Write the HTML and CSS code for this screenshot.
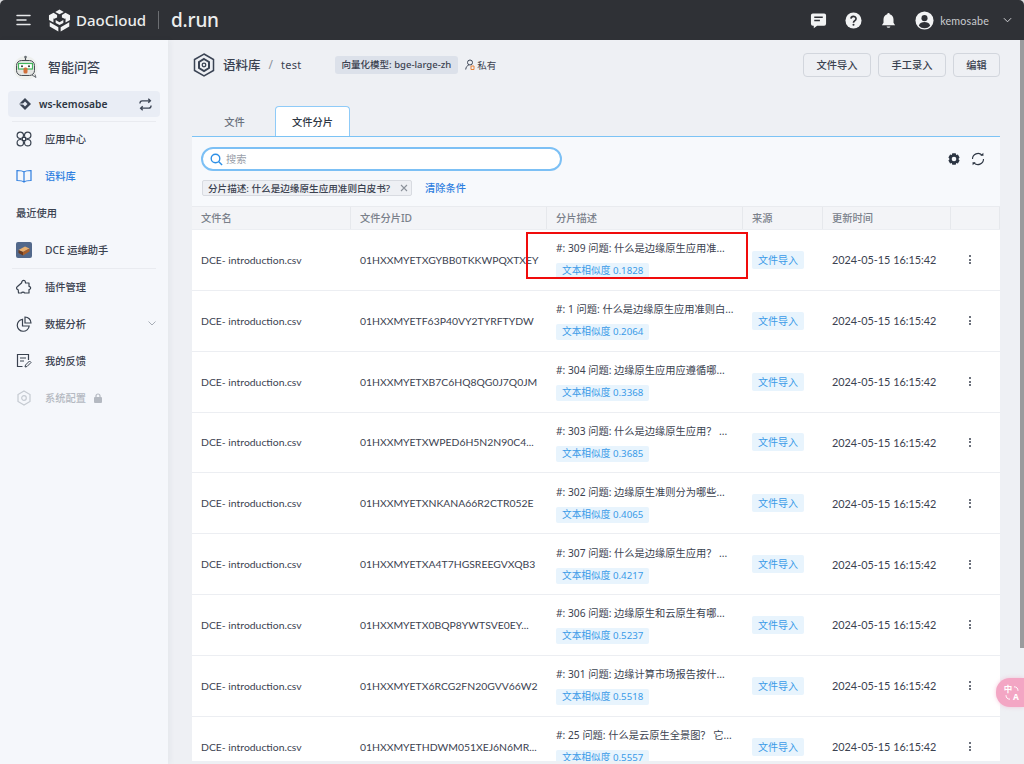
FILE: index.html
```html
<!DOCTYPE html>
<html lang="zh">
<head>
<meta charset="utf-8">
<title>语料库</title>
<link rel="stylesheet" href="styles.css">
</head>
<body>
<header class="topbar">
  <svg class="menu-icon" width="16" height="12" viewBox="0 0 16 12"><path d="M1 1.500h13M1 6h9M1 10.500h13" stroke="#e8e9eb" stroke-width="1.500" stroke-linecap="round" fill="none"/></svg>
  <svg class="logo-icon" width="23" height="23" viewBox="0 0 24 24"><path d="M12 .5l4.500 2.500L12 5.500 7.500 3zM5.800 4l3.700 2.200v2.600L6.600 10.300l-.9-.5v4.300L1 11.400V6.500zM18.200 4l-3.700 2.200v2.600l2.900 1.500.9-.5v4.300l4.700-2.700V6.500zM1.800 13.800l9 5.200v4.500l-9-5.200zM22.200 13.800l-9 5.200v4.500l9-5.200zM8 11.500l4 2.300 4-2.300v3l-4 2.300-4-2.300z" fill="#f2f3f4"/></svg>
  <span class="brand">DaoCloud</span>
  <span class="brand-sep"></span>
  <span class="brand-run">d.run</span>
  <span class="top-spacer"></span>
  <svg class="top-icon" width="17" height="17" viewBox="0 0 18 18"><path d="M3 1.500h12a2 2 0 0 1 2 2v9a2 2 0 0 1-2 2H7.500L4 17.200V14.500H3a2 2 0 0 1-2-2v-9a2 2 0 0 1 2-2z" fill="#f2f3f4"/><path d="M4.500 5.500h9M4.500 9h6" stroke="#2f3136" stroke-width="1.500"/></svg>
  <svg class="top-icon" width="17" height="17" viewBox="0 0 18 18"><circle cx="9" cy="9" r="8.500" fill="#f2f3f4"/><path d="M6.300 7a2.700 2.500 0 1 1 4 2.300c-1 .6-1.300 1-1.300 2" stroke="#2f3136" stroke-width="1.800" fill="none"/><circle cx="9" cy="13.500" r="1.100" fill="#2f3136"/></svg>
  <svg class="top-icon" width="17" height="17" viewBox="0 0 18 18"><path d="M9 1a1.300 1.300 0 0 1 1.300 1.400C13 3.100 14.300 5.300 14.300 8v3.500L16 14H2l1.700-2.500V8c0-2.700 1.300-4.900 4-5.600A1.300 1.300 0 0 1 9 1z" fill="#f2f3f4"/><path d="M7 15.300h4a2 1.500 0 0 1-4 0z" fill="#f2f3f4"/></svg>
  <svg class="user-icon" width="19" height="19" viewBox="0 0 20 20"><circle cx="10" cy="10" r="9.500" fill="#f2f3f4"/><circle cx="10" cy="7.500" r="3.200" fill="#2f3136"/><path d="M4 15.500c1-3 3.500-3.800 6-3.800s5 .8 6 3.800a8 8 0 0 1-12 0z" fill="#2f3136"/></svg>
  <span class="user-name">kemosabe</span>
  <svg class="user-caret" width="9" height="6" viewBox="0 0 10 6"><path d="M1 1l4 4 4-4" stroke="#d5d6d9" stroke-width="1.100" fill="none"/></svg>
</header>

<div class="shell">
  <aside class="sidebar">
    <div class="app-head">
      <svg width="26" height="26" viewBox="0 0 26 26"><circle cx="12.500" cy="14" r="12" fill="#eef0ee"/><path d="M12.500 3v3" stroke="#4a4f55" stroke-width="1.200"/><circle cx="12.500" cy="3" r="1.300" fill="#6a6f75"/><rect x="3.500" y="6.500" width="18" height="15" rx="5" fill="#e3e5e3" stroke="#4a4f55"/><rect x="5.500" y="9.500" width="14" height="5.500" fill="#fff" stroke="#43b65c" stroke-width="1.200"/><circle cx="9" cy="12.200" r="1" fill="#333"/><circle cx="16" cy="12.200" r="1" fill="#333"/><rect x="10.500" y="13.500" width="4" height="6" rx="1.500" fill="#d2703a"/><path d="M19 21l4 2.500-1-3" fill="#e3e5e3" stroke="#4a4f55" stroke-width=".8"/></svg>
      <span class="app-title">智能问答</span>
    </div>
    <div class="workspace">
      <svg width="14" height="14" viewBox="0 0 14 14"><path d="M7 1l6 6-6 6-6-6z" fill="#3b4454"/><path d="M7 4.500L9.500 7 7 9.500 4.500 7z" fill="#e9edf5"/><path d="M1 7h4" stroke="#e9edf5"/></svg>
      <span class="ws-name">ws-kemosabe</span>
      <svg class="ws-swap" width="13" height="13" viewBox="0 0 14 14"><path d="M1 6c0-1.800 1-3 2.500-3H12M10 .8L12.300 3 10 5.200M13 8c0 1.800-1 3-2.500 3H2M4 8.800L1.700 11 4 13.200" stroke="#3b4454" stroke-width="1.400" fill="none"/></svg>
    </div>
    <div class="side-rule"></div>
    <nav class="nav">
      <a class="nav-item">
        <svg width="16" height="16" viewBox="0 0 16 16"><g fill="none" stroke="#39424f" stroke-width="1.200"><circle cx="4.300" cy="4.300" r="3.200"/><circle cx="11.700" cy="4.300" r="3.200"/><circle cx="4.300" cy="11.700" r="3.200"/><circle cx="11.700" cy="11.700" r="3.200"/></g><rect x="6.500" y="6.500" width="3" height="3" fill="#f5f7fb" stroke="#39424f"/></svg>
        <span>应用中心</span>
      </a>
      <a class="nav-item nav-active">
        <svg width="16" height="16" viewBox="0 0 16 16"><path d="M8 4C6.500 2.800 4 2.500 1 2.500v10c3 0 5.500.3 7 1.500 1.500-1.200 4-1.500 7-1.500v-10C12 2.500 9.500 2.800 8 4zM8 4v10" stroke="#2f7fe0" stroke-width="1.200" fill="none"/></svg>
        <span>语料库</span>
      </a>
    </nav>
    <div class="recent">最近使用</div>
    <a class="nav-item">
      <svg width="16" height="16" viewBox="0 0 16 16"><rect width="16" height="16" rx="2" fill="#52688a"/><path d="M2.500 8l6.500-3.500 4.500 2-6.500 3.500z" fill="#e8b070"/><path d="M2.500 8L7 10v3.500l-4.500-2.500z" fill="#6b3a1c"/><path d="M7 10l6.500-3.500v3L7 13.500z" fill="#a8602c"/></svg>
      <span>DCE 运维助手</span>
    </a>
    <div class="side-rule side-rule-tight"></div>
    <a class="nav-item">
      <svg width="16" height="16" viewBox="0 0 16 16"><path d="M6 2.500c.3-1.500 3-1.500 3.300 0l.2 1.500h3.500v3.300c1.500.3 2 1.600 1.200 2.700-.3.400-.7.600-1.200.7V14H8.500c-.3-1.300-2.700-1.300-3 0H2.500l-.3-3.200C.3 10.500 0 8.500 1.500 7.500L5.500 4z" fill="none" stroke="#39424f" stroke-width="1.200" stroke-linejoin="round"/></svg>
      <span>插件管理</span>
    </a>
    <a class="nav-item">
      <svg width="16" height="16" viewBox="0 0 16 16"><g fill="none" stroke="#39424f" stroke-width="1.200"><path d="M6.500 3.300A6 6 0 1 0 13.200 10H6.500z"/><path d="M9 1a6 6 0 0 1 6 6H9z"/></g></svg>
      <span>数据分析</span>
      <svg class="nav-caret" width="8" height="5" viewBox="0 0 8 5"><path d="M.5.500L4 4 7.500.500" stroke="#a7adb6" fill="none"/></svg>
    </a>
    <a class="nav-item">
      <svg width="16" height="16" viewBox="0 0 16 16"><path d="M12.500 7V1.500h-11v12h5" fill="none" stroke="#39424f" stroke-width="1.200"/><path d="M4 5h6M4 8h4" stroke="#39424f" stroke-width="1.200"/><path d="M9 14l.5-2 4-4 1.500 1.500-4 4z" fill="none" stroke="#39424f"/></svg>
      <span>我的反馈</span>
    </a>
    <a class="nav-item nav-disabled">
      <svg width="16" height="16" viewBox="0 0 16 16"><path d="M8 1l6 3.500v7L8 15l-6-3.500v-7z" fill="none" stroke="#c5cad1" stroke-width="1.200"/><circle cx="8" cy="8" r="2.300" fill="none" stroke="#c5cad1" stroke-width="1.200"/></svg>
      <span>系统配置</span>
      <svg class="lock" width="10" height="10" viewBox="0 0 10 10"><rect x="1" y="4" width="8" height="6" rx="1" fill="#b4b9c1"/><path d="M3 4V3a2 2 0 0 1 4 0v1" stroke="#b4b9c1" stroke-width="1.200" fill="none"/></svg>
    </a>
  </aside>

  <main class="main">
    <div class="page-head">
      <svg class="head-icon" width="24" height="24" viewBox="0 0 24 24"><path d="M12 1l9.500 5.500v11L12 23l-9.500-5.500v-11z" fill="none" stroke="#3b4454" stroke-width="1.500"/><path d="M12 6l5 3v6l-5 3-5-3V9z" fill="none" stroke="#3b4454" stroke-width="2"/><circle cx="12" cy="12" r="1.800" fill="none" stroke="#3b4454" stroke-width="1.300"/></svg>
      <span class="crumb-root">语料库</span>
      <span class="crumb-sep">/</span>
      <span class="crumb-leaf">test</span>
      <span class="model-tag">向量化模型: bge-large-zh</span>
      <span class="private">
        <svg width="10" height="12" viewBox="0 0 10 12"><circle cx="5" cy="3.500" r="2.500" fill="none" stroke="#3b4454"/><path d="M.7 10.500c.3-2.500 1.500-4 3-4.300" stroke="#3b4454" fill="none"/><path d="M6 7h3v3.500H6z" fill="none" stroke="#e8833a"/></svg>
        私有
      </span>
      <span class="top-spacer"></span>
      <button class="btn">文件导入</button>
      <button class="btn">手工录入</button>
      <button class="btn btn-small">编辑</button>
    </div>

    <div class="tabs">
      <span class="tab">文件</span>
      <span class="tab tab-active">文件分片</span>
    </div>

    <section class="panel">
      <div class="toolbar">
        <div class="search">
          <svg width="13" height="13" viewBox="0 0 13 13"><circle cx="5.500" cy="5.500" r="4.300" fill="none" stroke="#2d8fe6" stroke-width="1.400"/><path d="M8.800 8.800l3.300 3.300" stroke="#2d8fe6" stroke-width="1.400"/></svg>
          <span class="search-hint">搜索</span>
        </div>
        <span class="top-spacer"></span>
        <svg class="tool-icon" width="14" height="14" viewBox="0 0 14 14"><path d="M5.300.8h3.400l.5 1.700 1.700-.4 1.700 3-1.200 1.400 1.200 1.400-1.700 3-1.700-.4-.5 1.700H5.300l-.5-1.700-1.700.4-1.700-3L2.600 6.500 1.400 5.100l1.700-3 1.700.4z" fill="#2d3643" transform="translate(0 .5)"/><circle cx="7" cy="7" r="2.300" fill="#f7f9fc"/></svg>
        <svg class="tool-icon" width="14" height="14" viewBox="0 0 14 14"><path d="M1.500 7A5.500 5.500 0 0 1 11 3.200M12.500 7A5.500 5.500 0 0 1 3 10.800" fill="none" stroke="#2d3643" stroke-width="1.100"/><path d="M9.300 3.800h3.200L12.300.8zM4.700 10.200H1.500l.2 3z" fill="#2d3643"/></svg>
      </div>
      <div class="filters">
        <span class="filter-chip"><span class="chip-text">分片描述: 什么是边缘原生应用准则白皮书?</span><svg width="8" height="8" viewBox="0 0 8 8"><path d="M1 1l6 6M7 1L1 7" stroke="#8b919a" stroke-width="1.100"/></svg></span>
        <a class="clear-link">清除条件</a>
      </div>
      <div class="table">
        <div class="row row-head">
          <div class="cell">文件名</div><div class="cell">文件分片ID</div><div class="cell">分片描述</div><div class="cell">来源</div><div class="cell">更新时间</div><div class="cell"></div>
        </div>
        <div class="row">
          <div class="cell cell-name">DCE- introduction.csv</div><div class="cell cell-id">01HXXMYETXGYBB0TKKWPQXTXEY</div>
          <div class="cell desc"><span>#: 309 问题: 什么是边缘原生应用准...</span><span class="score">文本相似度 0.1828</span></div>
          <div class="cell"><span class="source">文件导入</span></div><div class="cell cell-date">2024-05-15 16:15:42</div><div class="cell more"><i></i><i></i><i></i></div>
        </div>
        <div class="row">
          <div class="cell cell-name">DCE- introduction.csv</div><div class="cell cell-id">01HXXMYETF63P40VY2TYRFTYDW</div>
          <div class="cell desc"><span>#: 1 问题: 什么是边缘原生应用准则白...</span><span class="score">文本相似度 0.2064</span></div>
          <div class="cell"><span class="source">文件导入</span></div><div class="cell cell-date">2024-05-15 16:15:42</div><div class="cell more"><i></i><i></i><i></i></div>
        </div>
        <div class="row">
          <div class="cell cell-name">DCE- introduction.csv</div><div class="cell cell-id">01HXXMYETXB7C6HQ8QG0J7Q0JM</div>
          <div class="cell desc"><span>#: 304 问题: 边缘原生应用应遵循哪...</span><span class="score">文本相似度 0.3368</span></div>
          <div class="cell"><span class="source">文件导入</span></div><div class="cell cell-date">2024-05-15 16:15:42</div><div class="cell more"><i></i><i></i><i></i></div>
        </div>
        <div class="row">
          <div class="cell cell-name">DCE- introduction.csv</div><div class="cell cell-id">01HXXMYETXWPED6H5N2N90C4...</div>
          <div class="cell desc"><span>#: 303 问题: 什么是边缘原生应用？ ...</span><span class="score">文本相似度 0.3685</span></div>
          <div class="cell"><span class="source">文件导入</span></div><div class="cell cell-date">2024-05-15 16:15:42</div><div class="cell more"><i></i><i></i><i></i></div>
        </div>
        <div class="row">
          <div class="cell cell-name">DCE- introduction.csv</div><div class="cell cell-id">01HXXMYETXNKANA66R2CTR052E</div>
          <div class="cell desc"><span>#: 302 问题: 边缘原生准则分为哪些...</span><span class="score">文本相似度 0.4065</span></div>
          <div class="cell"><span class="source">文件导入</span></div><div class="cell cell-date">2024-05-15 16:15:42</div><div class="cell more"><i></i><i></i><i></i></div>
        </div>
        <div class="row">
          <div class="cell cell-name">DCE- introduction.csv</div><div class="cell cell-id">01HXXMYETXA4T7HGSREEGVXQB3</div>
          <div class="cell desc"><span>#: 307 问题: 什么是边缘原生应用？ ...</span><span class="score">文本相似度 0.4217</span></div>
          <div class="cell"><span class="source">文件导入</span></div><div class="cell cell-date">2024-05-15 16:15:42</div><div class="cell more"><i></i><i></i><i></i></div>
        </div>
        <div class="row">
          <div class="cell cell-name">DCE- introduction.csv</div><div class="cell cell-id">01HXXMYETX0BQP8YWTSVE0EY...</div>
          <div class="cell desc"><span>#: 306 问题: 边缘原生和云原生有哪...</span><span class="score">文本相似度 0.5237</span></div>
          <div class="cell"><span class="source">文件导入</span></div><div class="cell cell-date">2024-05-15 16:15:42</div><div class="cell more"><i></i><i></i><i></i></div>
        </div>
        <div class="row">
          <div class="cell cell-name">DCE- introduction.csv</div><div class="cell cell-id">01HXXMYETX6RCG2FN20GVV66W2</div>
          <div class="cell desc"><span>#: 301 问题: 边缘计算市场报告按什...</span><span class="score">文本相似度 0.5518</span></div>
          <div class="cell"><span class="source">文件导入</span></div><div class="cell cell-date">2024-05-15 16:15:42</div><div class="cell more"><i></i><i></i><i></i></div>
        </div>
        <div class="row">
          <div class="cell cell-name">DCE- introduction.csv</div><div class="cell cell-id">01HXXMYETHDWM051XEJ6N6MR...</div>
          <div class="cell desc"><span>#: 25 问题: 什么是云原生全景图？ 它...</span><span class="score">文本相似度 0.5557</span></div>
          <div class="cell"><span class="source">文件导入</span></div><div class="cell cell-date">2024-05-15 16:15:42</div><div class="cell more"><i></i><i></i><i></i></div>
        </div>
      </div>
    </section>
  </main>
</div>
<div class="scroll-thumb"></div>
<div class="highlight"></div>
<div class="translate">
  <span class="tr-zh">中</span>
  <svg width="6" height="6" viewBox="0 0 6 6"><path d="M1 .8c2.500 0 4 1.500 4 4" stroke="#fff" fill="none"/></svg>
  <svg width="6" height="6" viewBox="0 0 6 6"><path d="M5 5.200c-2.500 0-4-1.500-4-4" stroke="#fff" fill="none"/></svg>
  <span class="tr-a">A</span>
</div>
</body>
</html>
```
FILE: styles.css
```css
* { box-sizing: border-box; }
html, body { margin: 0; height: 100%; overflow: hidden; }
html { background: #d9dadc; }
body {
  font-family: "Noto Sans", "Noto Sans CJK SC", sans-serif;
  font-size: 10.240px;
  color: #3b4250;
  display: flex;
  flex-direction: column;
}
svg { flex: none; display: block; }
.topbar {
  height: 40px;
  flex: none;
  background: #2f3136;
  border-radius: 5px 5px 0 0;
  display: flex;
  align-items: center;
  padding-left: 16px;
}
.menu-icon { margin-right: 16px; }
.logo-icon { margin-right: 5px; }
.brand { font-size: 15px; font-weight: 500; color: #eceded; width: 70px; white-space: nowrap; }
.brand-sep { width: 1px; height: 18px; background: #6c6e72; margin: 0 12px; }
.brand-run { font-size: 19px; line-height: 24px; font-weight: 500; color: #eceded; letter-spacing: -.2px; }
.top-spacer { flex: 1; }
.top-icon { margin-right: 18px; }
.user-icon { margin-right: 6px; }
.user-name { color: #c9cbcf; font-family: Lato, "Noto Sans", sans-serif; font-size: 10.700px; letter-spacing: .2px; margin-right: 14px; }
.user-caret { margin-right: 12px; }

.shell { flex: 1; min-height: 0; display: flex; background: #eef0f4; }
.sidebar {
  width: 168px;
  flex: none;
  background: #f5f7fb;
  box-shadow: 2px 0 6px rgba(40, 50, 70, .05);
  padding: 0 8px;
}
.app-head { height: 51px; display: flex; align-items: center; gap: 9px; padding: 2px 0 0 5px; }
.app-title { font-size: 13px; font-weight: 500; color: #3b4250; }
.workspace {
  height: 26px;
  background: #e9edf5;
  border-radius: 4px;
  display: flex;
  align-items: center;
  padding: 0 8px 0 10px;
  gap: 7px;
  font-weight: 600;
  color: #2d3643;
}
.ws-name { flex: 1; }
.side-rule { height: 1px; background: #e9ebf0; margin: 4px 4px -2px; }
.side-rule-tight { margin: 0 4px -1px; }
.nav-item {
  height: 37px;
  display: flex;
  align-items: center;
  gap: 13px;
  padding-left: 8px;
  font-weight: 500;
  color: #3b4250;
}
.nav-active { color: #2f7fe0; }
.nav-disabled { color: #b4b9c1; }
.nav-caret { margin-left: auto; margin-right: 4px; }
.lock { margin-left: -6px; }
.recent { height: 37px; display: flex; align-items: center; padding-left: 8px; font-weight: 500; color: #3b4250; }

.main { flex: 1; min-width: 0; padding: 0 24px; display: flex; flex-direction: column; }
.page-head { height: 49px; flex: none; display: flex; align-items: center; }
.head-icon { margin-right: 7px; }
.crumb-root { font-size: 12.500px; font-weight: 500; color: #3b4250; }
.crumb-sep { margin: 0 8px; font-size: 12px; color: #8d939c; }
.crumb-leaf { font-size: 11px; color: #3b4250; letter-spacing: .3px; margin-right: 33px; }
.model-tag { background: #dce1ea; border-radius: 3px; height: 18px; line-height: 18px; padding: 0 7px; font-size: 9.500px; font-weight: 500; color: #3b4250; white-space: nowrap; }
.private { display: flex; align-items: center; gap: 2px; font-size: 9.500px; margin-left: 7px; }
.btn {
  width: 68px;
  height: 24px;
  margin-left: 7px;
  background: transparent;
  border: 1px solid #d2d6dd;
  border-radius: 4px;
  font: 500 10.240px "Noto Sans", "Noto Sans CJK SC", sans-serif;
  color: #3b4250;
  padding: 0;
}
.btn-small { width: 47px; }
.tabs { height: 37px; flex: none; margin-top: 10px; display: flex; align-items: flex-end; }
.tab { width: 83px; height: 30px; display: flex; align-items: center; justify-content: center; padding-left: 2px; font-weight: 500; color: #6b727d; }
.tab-active {
  width: 75px;
  padding-left: 0;
  background: #fff;
  color: #2d3643;
  border: 1px solid #8fcbf8;
  border-bottom: 0;
  border-radius: 4px 4px 0 0;
}
.panel { flex: 1; min-height: 0; overflow: hidden; background: #f7f9fc; border-top: 1px solid #7cc3f5; margin-bottom: 3px; }
.toolbar { display: flex; align-items: center; height: 24px; margin: 10px 0 0 9px; padding-right: 15px; gap: 10px; }
.search {
  width: 361px;
  height: 24px;
  background: #fff;
  border: 2px solid #7cc0f5;
  border-radius: 12px;
  display: flex;
  align-items: center;
  gap: 3px;
  padding-left: 7px;
  color: #9aa0a9;
}
.search-hint { margin-top: -2px; }
.filters { display: flex; align-items: center; height: 16px; margin: 9px 0 0 10px; gap: 13px; }
.filter-chip {
  height: 16px;
  display: flex;
  align-items: center;
  gap: 10px;
  padding: 0 3px 0 5px;
  background: #eef0f4;
  border: 1px solid #d8dbe1;
  border-radius: 2px;
  font-size: 9.600px;
  font-weight: 500;
  white-space: nowrap;
}
.chip-text { margin-top: -1px; }
.clear-link { color: #2f7fe0; font-weight: 500; margin-top: -1px; }
.table { margin-top: 10px; }
.row {
  display: grid;
  grid-template-columns: 159px 196px 196px 80px 128px 49px;
  height: 60.850px;
  background: #fff;
  border-bottom: 1px solid #eceef2;
  align-items: center;
}
.row-head {
  height: 24px;
  background: #f3f4f7;
  font-weight: 500;
  border-top: 1px solid #e9ebef;
  align-items: stretch;
}
.row-head .cell { display: flex; align-items: center; padding-bottom: 2px; border-right: 1px solid #e6e8ec; color: #7a808a; }
.cell { padding: 0 9px; white-space: nowrap; min-width: 0; color: #3b4250; }
.cell-name, .cell-id { font-family: Lato, "Noto Sans", sans-serif; font-size: 10.400px; }
.cell-date { font-family: Lato, "Noto Sans", sans-serif; font-size: 10.850px; }
.desc { display: flex; flex-direction: column; align-items: flex-start; gap: 8px; }
.score { height: 16px; line-height: 16px; padding: 0 6px; font-size: 9.700px; background: #e8f4fd; color: #3a9be8; border-radius: 2px; }
.source { display: inline-block; height: 18px; line-height: 18px; padding: 0 6px; font-size: 10px; background: #e8f4fd; color: #3a9be8; border-radius: 2px; }
.more { display: flex; flex-direction: column; align-items: flex-start; gap: 1.500px; padding-left: 18px; }
.more i { width: 2px; height: 2px; border-radius: 50%; background: #3b4250; display: block; }
.scroll-thumb { position: absolute; top: 40px; right: 0; width: 4px; height: 608px; background: #9a9b9d; }
.highlight { position: absolute; left: 526px; top: 232px; width: 222px; height: 47px; border: 2px solid #f00c0c; }
.translate {
  position: absolute;
  right: 0;
  top: 678px;
  width: 28px;
  height: 29px;
  background: #f3a6c4;
  border-radius: 14px 0 0 14px;
  box-shadow: 0 0 4px rgba(243, 166, 196, .6);
  color: #fff;
  font-weight: 700;
  display: grid;
  grid-template-columns: 8px 8px;
  grid-auto-rows: 8px;
  align-items: center;
  justify-items: center;
  align-content: center;
  padding-left: 8px;
}
.tr-zh, .tr-a { font-size: 8.500px; line-height: 8px; }
```
